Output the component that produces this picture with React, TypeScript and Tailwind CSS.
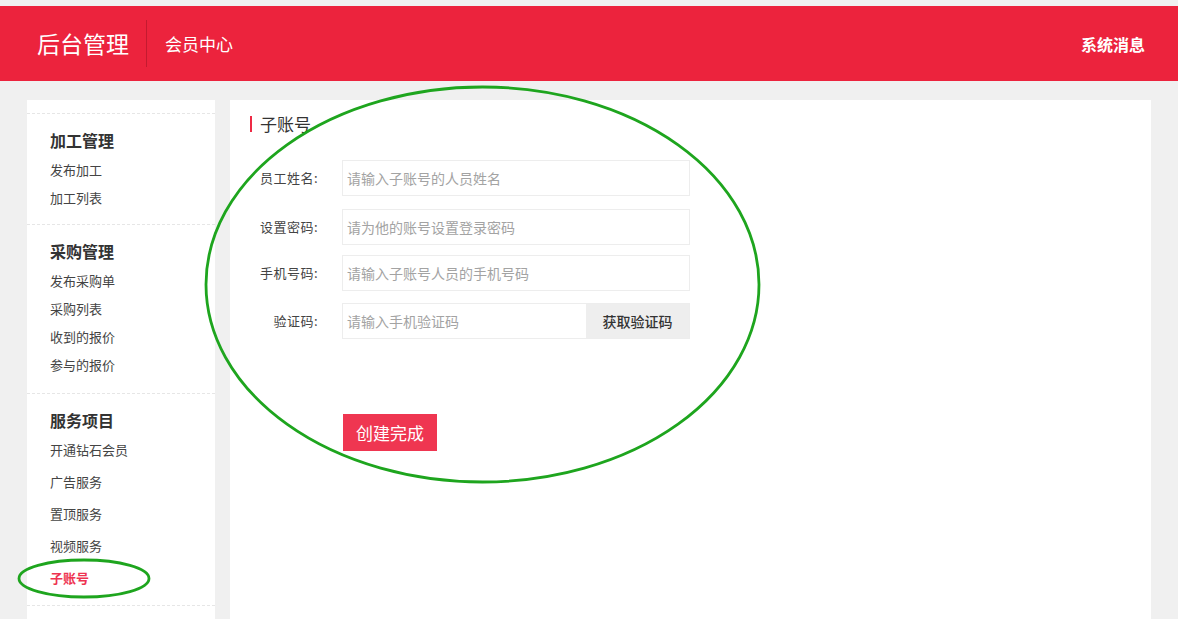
import React from 'react';

const FONT = { fontFamily: '"Noto Sans CJK SC", "Noto Sans", sans-serif' };

const MENU = [
  { title: '加工管理', items: ['发布加工', '加工列表'], itemH: 'h-7', mt: 'mt-[2px]', pb: 'pb-[12px]' },
  { title: '采购管理', items: ['发布采购单', '采购列表', '收到的报价', '参与的报价'], itemH: 'h-7', mt: 'mt-[2px]', pb: 'pb-[14px]' },
  { title: '服务项目', items: ['开通钻石会员', '广告服务', '置顶服务', '视频服务', '子账号'], itemH: 'h-8', mt: 'mt-0', pb: 'pb-[11px]' },
];

const FIELDS = [
  { label: '员工姓名:', placeholder: '请输入子账号的人员姓名', mt: 'mt-0' },
  { label: '设置密码:', placeholder: '请为他的账号设置登录密码', mt: 'mt-[13px]' },
  { label: '手机号码:', placeholder: '请输入子账号人员的手机号码', mt: 'mt-[10px]' },
];

function Sidebar() {
  return (
    <aside className="w-[188px] shrink-0 bg-white pt-[13px]">
      {MENU.map((sec) => (
        <div key={sec.title} className={`border-t border-dashed border-[#e6e6e6] pt-[12px] pl-[23px] ${sec.pb}`}>
          <div className="h-7 leading-7 text-[16px] font-bold text-[#333]">{sec.title}</div>
          <div className={sec.mt}>
            {sec.items.map((it) => (
              <div
                key={it}
                className={`${sec.itemH} flex items-center text-[13px] ${it === '子账号' ? 'text-[#ee3350] font-bold' : 'text-[#444]'}`}
              >
                {it}
              </div>
            ))}
          </div>
        </div>
      ))}
      <div className="border-t border-dashed border-[#e6e6e6]" />
    </aside>
  );
}

function FormRow({ label, mt, children }: { label: string; mt: string; children: React.ReactNode }) {
  return (
    <div className={`flex items-center ${mt}`}>
      <div className="w-[68px] text-right text-[13px] text-[#444] tracking-[0.5px]">{label}</div>
      <div className="ml-[24px] flex h-9 w-[348px] border border-[#ededed]">{children}</div>
    </div>
  );
}

function MainPanel() {
  return (
    <main className="flex-1 bg-white pl-[20px] pt-[11px]">
      <div className="flex h-[26px] items-center">
        <span className="h-4 w-[2px] bg-[#ee2a45]" />
        <span className="ml-2 text-[17px] text-[#333]">子账号</span>
      </div>
      <div className="mt-[23px] flex flex-col">
        {FIELDS.map((f) => (
          <FormRow key={f.label} label={f.label} mt={f.mt}>
            <input
              className="h-full w-full px-[4px] text-[14px] text-[#333] outline-none placeholder:text-[#a3a3a3]"
              placeholder={f.placeholder}
              style={FONT}
            />
          </FormRow>
        ))}
        <FormRow label="验证码:" mt="mt-[12px]">
          <input
            className="h-full min-w-0 flex-1 px-[4px] text-[14px] text-[#333] outline-none placeholder:text-[#a3a3a3]"
            placeholder="请输入手机验证码"
            style={FONT}
          />
          <button className="h-full w-[103px] bg-[#eeeeee] text-[14px] font-medium text-[#333]" style={FONT}>
            获取验证码
          </button>
        </FormRow>
      </div>
      <button
        className="ml-[93px] mt-[75px] h-[37px] w-[94px] bg-[#ef3651] text-[17px] text-white"
        style={FONT}
      >
        创建完成
      </button>
    </main>
  );
}

export default function App() {
  return (
    <div className="relative flex h-screen flex-col overflow-hidden bg-[#f0f0f0] pt-[6px]" style={FONT}>
      <header className="flex h-[75px] shrink-0 items-center bg-[#ec233d] pl-[37px] pr-[33px] text-white">
        <span className="text-[23px]">后台管理</span>
        <span className="ml-[17px] h-[47px] w-px bg-[#c41a30]" />
        <span className="ml-[18px] text-[17px]">会员中心</span>
        <span className="ml-auto text-[16px] font-bold">系统消息</span>
      </header>
      <div className="flex min-h-0 flex-1 gap-[15px] px-[27px] pt-[19px]">
        <Sidebar />
        <MainPanel />
      </div>
      <svg className="pointer-events-none absolute left-0 top-0" width="1178" height="619">
        <ellipse cx="482.5" cy="284.5" rx="276.5" ry="197.5" fill="none" stroke="#1ea51e" strokeWidth="2.8" />
        <ellipse cx="84" cy="578.5" rx="65" ry="18.5" fill="none" stroke="#1ea51e" strokeWidth="2.8" />
      </svg>
    </div>
  );
}
